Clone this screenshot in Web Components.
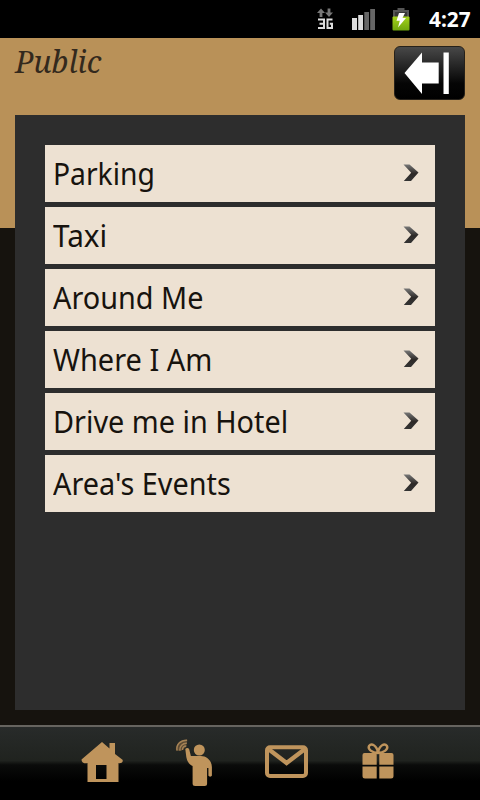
<!DOCTYPE html>
<html lang="en">
<head>
<meta charset="utf-8">
<title>Public</title>
<style>
html, body { margin: 0; padding: 0; background: #16130e; }
</style>
</head>
<body>
<hotel-app></hotel-app>
<script>
function define(name, html) {
  const t = document.createElement('template');
  t.innerHTML = html;
  customElements.define(name, class extends HTMLElement {
    constructor() {
      super();
      this.attachShadow({ mode: 'open' }).append(t.content.cloneNode(true));
    }
  });
}

define('status-bar', `
<style>
:host { display: flex; height: 38px; background: #000; align-items: center; justify-content: flex-end; box-sizing: border-box; padding-right: 9px; }
svg { display: block; flex: none; }
.time { font: bold 21px/38px "Noto Sans", "Open Sans", sans-serif; color: #fff; width: 42px; margin-left: 18px; white-space: nowrap; }
.time span { display: inline-block; transform-origin: 0 50%; transform: scaleX(.99); }
</style>
<svg width="94" height="38" viewBox="317 0 94 38">
  <defs><linearGradient id="b" x1="0" y1="0" x2="0" y2="1"><stop offset="0" stop-color="#a5d31c"/><stop offset="1" stop-color="#70a60c"/></linearGradient></defs>
  <path d="M321 8.500l4 4.500h-2.600v4h-2.800v-4H317zM329 17l-4-4.500h2.600v-4h2.800v4H333z" fill="#777"/>
  <path d="M318 19.500h6v8.500H318M319.500 23.700h4.500M332.500 19.500h-5v8.500h4.500v-4.200h-2.200" fill="none" stroke="#ddd" stroke-width="2"/>
  <path d="M352 18h5v12h-5zM358.200 15h4.800v15h-4.800z" fill="#ddd"/>
  <path d="M364.300 12h4.700v18h-4.700zM370.200 9h4.800v21h-4.800z" fill="#666"/>
  <path d="M393 10h4.500V8h7v2h4.500v7h-16z" fill="#555"/>
  <path d="M395 12h12v5h-12z" fill="#383838"/>
  <rect x="392.500" y="16.500" width="17" height="14" rx="1" fill="url(#b)"/>
  <path d="M399 13h6l-2.500 5h3.500l-8 9.500 1.800-6.800H396.500z" fill="#fff"/>
</svg>
<div class="time"><span>4:27</span></div>`);

define('back-button', `
<style>
:host { display: block; width: 71px; height: 54px; box-sizing: border-box; border: 1px solid #26211a; border-radius: 6px; background: linear-gradient(#484848, #202020 42%, #050505 70%, #000); }
svg { display: block; margin: -1px; }
</style>
<svg width="71" height="54" viewBox="394 46 71 54"><path d="M404.500 73L422 52.500V62.500h16.700v21H422V94z M443.500 52.500h5.300V94h-5.300z" fill="#fff"/></svg>`);

define('page-header', `
<style>
:host { display: flex; justify-content: space-between; align-items: flex-start; height: 77px; box-sizing: border-box; padding: 8px 15px 0; }
.title { font: italic 30px/32px "Noto Serif", "Liberation Serif", serif; color: #33291d; white-space: nowrap; }
</style>
<div class="title"><slot></slot></div><back-button></back-button>`);

define('menu-row', `
<style>
:host { display: flex; justify-content: space-between; align-items: center; height: 57px; background: #ede1d2; box-sizing: border-box; padding: 0 14px 0 8px; }
.label { font: 30px/57px "Noto Sans", "Open Sans", sans-serif; color: #17130e; white-space: nowrap; transform-origin: 0 50%; transform: scaleX(var(--stretch, .961)); }
svg { display: block; flex: none; margin-top: -1px; }
</style>
<div class="label"><slot></slot></div>
<svg width="18" height="18" viewBox="0 0 18 18"><defs><linearGradient id="g" x1="0" y1="0" x2="0" y2="1"><stop offset="0" stop-color="#777"/><stop offset=".55" stop-color="#2e2a28"/><stop offset="1" stop-color="#333"/></linearGradient></defs><path d="M.5.5H6.500L15.500 8.500 8 17H.8L8.200 8.800z" fill="url(#g)"/></svg>`);

define('menu-panel', `
<style>
:host { display: flex; flex-direction: column; gap: 5px; box-sizing: border-box; height: 595px; margin: 0 15px; padding: 30px; background: #2d2d2d; }
</style><slot></slot>`);

define('tab-bar', `
<style>
:host { display: flex; height: 75px; box-sizing: border-box; border-top: 2px solid #66645f; background: linear-gradient(#282b2a, #20231f 46%, #0a0b0a 52%, #000 75%); align-items: flex-start; padding: 12px 85px 0 79px; justify-content: space-between; }
svg { display: block; fill: #bf945c; }
</style>
<svg width="46" height="50" viewBox="79 739 46 50"><path fill-rule="evenodd" d="M102 742l7.500 6.500V743h5.500v11l7.500 5.800c1 2-1 4-4 3.200V782H87.500V763c-4 1-6-1-6-3.500zM96 765v14h10.500v-14z"/></svg>
<svg width="40" height="50" viewBox="175 739 40 50"><circle cx="199.300" cy="750" r="5.500"/><path d="M185.300 749c1-1.500 3-1.500 3.800 0l1.800 7h10c6 0 11 5 11 11v8.500c-.500 1.500-3 1.500-3.500 0V768h-1.300v15.500q0 2.500-2.500 2.500h-9.500q-2.500 0-2.500-2.500V766c-4-2-5.500-5-6.300-9z"/><path d="M176 750.500c-1-6 4-11 11.500-10.800L186 747l-5 4z" fill="#5c4a33"/><path d="M177 750.500c-1-6 3.500-10.500 10-10.300M179.800 750.500c-.5-4 3-7.500 7-7.300M182.500 750c0-2.500 1.500-4 3.800-4" fill="none" stroke="#a58255" stroke-width="1.500"/></svg>
<svg width="46" height="50" viewBox="265 739 46 50"><rect x="267" y="747.200" width="39" height="28.800" rx="3" fill="none" stroke="#bf945c" stroke-width="4"/><path d="M269 749.500l17.600 13.500 17.700-13.500" fill="none" stroke="#bf945c" stroke-width="4.300"/></svg>
<svg width="34" height="50" viewBox="361 739 34 50"><path d="M362.500 755q0-2 2-2H376.700v11.800H362.500zM379.300 753h12.200q2 0 2 2v9.800h-14.200zM362.500 766.500h14.200V778.500H365q-2.500 0-2.500-2.500zM379.300 766.500h14.200V776q0 2.500-2.500 2.500h-11.700z"/><path d="M378 753c-6 0-10.500-4-9-7 2.500-3.500 8-.5 9 7 1-7.500 6.500-10.500 9-7 1.500 3-3 7-9 7z" fill="none" stroke="#bf945c" stroke-width="2.400"/></svg>`);

define('hotel-app', `
<style>
:host { display: flex; flex-direction: column; width: 480px; height: 800px; overflow: hidden; background: linear-gradient(#b99158 228px, #16130e 228px); }
tab-bar { margin-top: auto; }
</style>
<status-bar></status-bar>
<page-header>Public</page-header>
<menu-panel>
  <menu-row style="--stretch:.942">Parking</menu-row>
  <menu-row style="--stretch:.99">Taxi</menu-row>
  <menu-row>Around Me</menu-row>
  <menu-row style="--stretch:.966">Where I Am</menu-row>
  <menu-row>Drive me in Hotel</menu-row>
  <menu-row>Area's Events</menu-row>
</menu-panel>
<tab-bar></tab-bar>`);
</script>
</body>
</html>
